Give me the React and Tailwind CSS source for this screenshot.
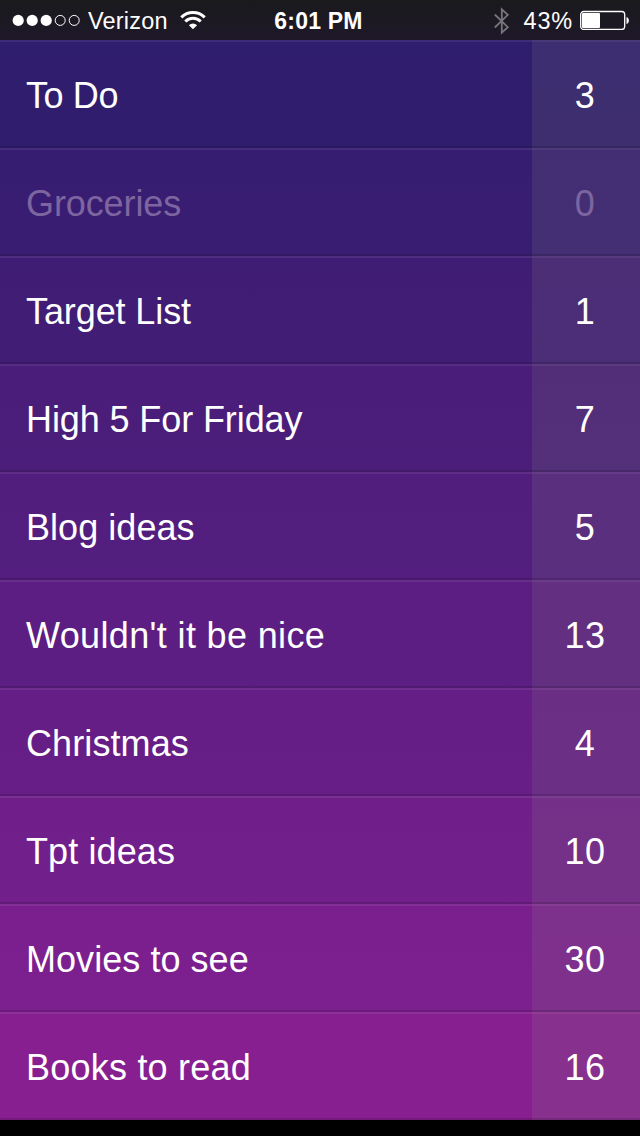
import React from 'react';
import clsx from 'clsx';

const lists = [
    { name: 'To Do', count: 3, color: 'from-[#2f1d6e] to-[#311d6e]', tracking: 'tracking-[-0.4px]' },
    { name: 'Groceries', count: 0, color: 'from-[#371d72] to-[#391d73]', tracking: 'tracking-[-0.1px]' },
    { name: 'Target List', count: 1, color: 'from-[#401d75] to-[#421d76]', tracking: 'tracking-[-0.1px]' },
    { name: 'High 5 For Friday', count: 7, color: 'from-[#491d79] to-[#4b1e7a]', tracking: 'tracking-[-0.1px]' },
    { name: 'Blog ideas', count: 5, color: 'from-[#521e7e] to-[#531e7f]', tracking: 'tracking-[0.05px]' },
    { name: "Wouldn't it be nice", count: 13, color: 'from-[#5c1e82] to-[#5c1e82]', tracking: 'tracking-[0.36px]' },
    { name: 'Christmas', count: 4, color: 'from-[#651e86] to-[#671e87]', tracking: 'tracking-[0.1px]' },
    { name: 'Tpt ideas', count: 10, color: 'from-[#701f8a] to-[#721f8b]', tracking: 'tracking-[0.1px]' },
    { name: 'Movies to see', count: 30, color: 'from-[#7b1f8e] to-[#7c1f8f]', tracking: 'tracking-[0.05px]' },
    { name: 'Books to read', count: 16, color: 'from-[#871f90] to-[#881f90]', tracking: 'tracking-[0.22px]' }
];

function SignalDots() {
    return (
        <svg className="h-3 w-[68px]" viewBox="0 0 68 12" fill="none" stroke="white">
            {[0, 1, 2, 3, 4].map((index) => (
                <circle
                    key={index}
                    cx={6.2 + index * 14}
                    cy="6.4"
                    r={index < 3 ? 5.6 : 5}
                    fill={index < 3 ? 'white' : 'none'}
                    strokeWidth={index < 3 ? 0 : 1}
                />
            ))}
        </svg>
    );
}

function WifiIcon() {
    return (
        <svg className="mt-px h-[19px] w-[26px]" viewBox="0 0 26 19" fill="none" stroke="white" strokeWidth="3">
            <path d="M1.3 6.4a16.6 16.6 0 0 1 23.4 0" />
            <path d="M5.3 10.5a10.9 10.9 0 0 1 15.4 0" />
            <path d="M13 18.3L8.9 14.2a5.8 5.8 0 0 1 8.2 0z" fill="white" stroke="none" />
        </svg>
    );
}

function BluetoothIcon() {
    return (
        <svg className="mt-px h-7 w-4" viewBox="0 0 16 28" fill="none" stroke="#77757b" strokeWidth="1.8">
            <path d="M0.8 7.5l13 12.7-6 5.5V2.3l6 5.5L0.8 20.5" />
        </svg>
    );
}

function BatteryIcon() {
    return (
        <svg className="h-5 w-[50px]" viewBox="0 0 50 20" fill="none">
            <rect x="0.7" y="1.5" width="44" height="18" rx="3" stroke="white" strokeWidth="1.3" />
            <rect x="2" y="3" width="18" height="15" rx="1" fill="white" />
            <path d="M46.5 7c3.2 1 3.2 6 0 7z" fill="white" />
        </svg>
    );
}

function StatusBar() {
    return (
        <header className="grid h-10 grid-cols-[1fr_auto_1fr] items-center bg-linear-to-b from-[#1a1a1c] to-[#1e1829] text-white">
            <div className="flex items-center pl-3">
                <SignalDots />
                <span className="ml-2 w-[92px] pt-[3px] whitespace-nowrap text-[23.5px] tracking-[0.2px]">Verizon</span>
                <WifiIcon />
            </div>
            <span className="pt-0.5 pr-[3px] text-[23px] font-bold tracking-[0.2px]">6:01 PM</span>
            <div className="flex items-center justify-end pr-2.5">
                <BluetoothIcon />
                <span className="mr-[7px] ml-3.5 pt-[3px] whitespace-nowrap text-[23.5px] tracking-[0.8px]">43%</span>
                <BatteryIcon />
            </div>
        </header>
    );
}

function ListRow({ list }) {
    const empty = list.count === 0;

    return (
        <li
            className={clsx(
                'flex h-[108px] bg-linear-to-b text-4xl',
                list.color,
                empty ? 'text-[#7d659f]' : 'text-white'
            )}
        >
            <div className="flex flex-1 items-center border-t-2 border-b-2 border-t-white/7 border-b-black/13 pt-[3px] pl-[26px]">
                <span className={clsx('whitespace-nowrap', list.tracking)}>{list.name}</span>
            </div>
            <div className="flex w-[108px] items-center justify-center border-t-2 border-b-2 border-t-white/6 border-b-black/13 bg-[#8e9a80]/14 pt-1 pr-0.5 tracking-[0.5px]">
                {list.count}
            </div>
        </li>
    );
}

export function App() {
    return (
        <div className="min-h-screen bg-black font-['Liberation_Sans',Arial,sans-serif]">
            <StatusBar />
            <ul>
                {lists.map((list) => (
                    <ListRow key={list.name} list={list} />
                ))}
            </ul>
        </div>
    );
}

export default App;
